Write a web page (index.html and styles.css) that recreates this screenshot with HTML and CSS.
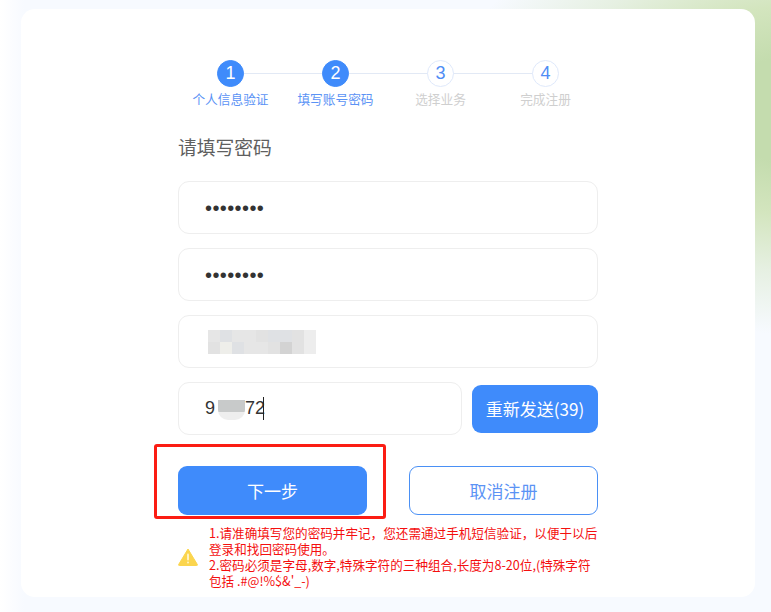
FILE: index.html
```html
<!DOCTYPE html>
<html lang="zh-CN">
<head>
<meta charset="utf-8">
<title>填写账号密码</title>
<link rel="stylesheet" href="styles.css">
</head>
<body>
<main class="card">
  <ol class="steps">
    <li class="step done"><span class="num">1</span><span class="label">个人信息验证</span></li>
    <li class="step done"><span class="num">2</span><span class="label">填写账号密码</span></li>
    <li class="step"><span class="num">3</span><span class="label">选择业务</span></li>
    <li class="step"><span class="num">4</span><span class="label">完成注册</span></li>
  </ol>
  <form class="form">
    <h1 class="title">请填写密码</h1>
    <input class="field pw" type="password" value="12345678">
    <input class="field pw" type="password" value="12345678">
    <div class="field mosaic-field">
      <div class="mosaic">
        <i class="m1"></i><i class="m2"></i><i class="m1"></i><i class="m1"></i><i class="m3"></i><i class="m2"></i><i class="m2"></i><i class="m3"></i><i class="m4"></i>
        <i class="m3"></i><i class="m5"></i><i class="m2"></i><i class="m1"></i><i class="m1"></i><i class="m3"></i><i class="m6"></i><i class="m3"></i><i class="m4"></i>
      </div>
    </div>
    <div class="code-row">
      <div class="field code"><span class="code-text">9<span class="smudge"></span>72</span><span class="caret"></span></div>
      <button type="button" class="resend">重新发送(39)</button>
    </div>
    <div class="actions">
      <div class="next-wrap">
        <button type="button" class="btn primary">下一步</button>
        <span class="highlight"></span>
      </div>
      <button type="button" class="btn outline">取消注册</button>
    </div>
    <div class="notice">
      <svg class="warn" viewBox="0 0 20 18" width="20" height="18" aria-hidden="true">
        <path d="M10 1 L19.4 16.6 Q19.6 17.5 18.7 17.5 L1.3 17.5 Q.4 17.5 .6 16.6 Z" fill="#fbd54e" stroke="#fbd54e" stroke-linejoin="round"/>
        <rect x="9" y="5.5" width="2" height="7" rx="1" fill="#fff3c4"/>
        <rect x="9" y="13.6" width="2" height="2" rx="1" fill="#fff3c4"/>
      </svg>
      <p class="notice-text">1.请准确填写您的密码并牢记，您还需通过手机短信验证，以便于以后登录和找回密码使用。<br>2.密码必须是字母,数字,特殊字符的三种组合,长度为8-20位,(特殊字符包括 .#@!%$&amp;'_-)</p>
    </div>
  </form>
</main>
</body>
</html>
```
FILE: styles.css
```css
* { box-sizing: border-box; }
html, body { height: 100%; }
body {
  margin: 0;
  padding: 9px 16px 15px 21px;
  overflow: hidden;
  font-family: "Noto Sans CJK SC", "Liberation Sans", sans-serif;
  background:
    radial-gradient(360px 225px at 810px 110px, #c4dcae 0, #c4dcae 25%, #d3e5be 47%, #e6f0e2 72%, rgba(248, 251, 255, 0) 100%),
    linear-gradient(90deg, #fff 0, #f7faff 24px);
}
.card {
  height: 588px;
  background: #fff;
  border-radius: 14px;
  padding: 51px 157px 0;
}
.steps {
  list-style: none;
  margin: 0;
  padding: 0;
  display: flex;
  width: 420px;
}
.step {
  flex: 0 0 105px;
  display: flex;
  flex-direction: column;
  align-items: center;
  position: relative;
}
.step + .step::before {
  content: "";
  position: absolute;
  top: 13px;
  right: 50%;
  width: 105px;
  height: 1px;
  background: #e2e9f5;
}
.num {
  position: relative;
  z-index: 1;
  width: 27px;
  height: 27px;
  border-radius: 50%;
  border: 1px solid #dfe9fb;
  background: #fff;
  color: #4f8df5;
  font: 18px/25px "Liberation Sans", sans-serif;
  text-align: center;
}
.done .num { background: #3f8bfb; border-color: #3f8bfb; color: #fff; }
.label {
  margin-top: 3px;
  font-size: 12.7px;
  line-height: 18px;
  color: #cfcfcf;
  white-space: nowrap;
}
.done .label { color: #5b93f5; }
.form { display: flex; flex-direction: column; }
.title {
  margin: 26px 0 21px;
  font-size: 18.8px;
  font-weight: 400;
  line-height: 26px;
  color: #5f5f5f;
}
.field {
  display: block;
  width: 420px;
  height: 53px;
  margin: 0 0 14px;
  border: 1px solid #eeeeee;
  border-radius: 11px;
  background: #fff;
  outline: none;
  padding: 0 26px;
  color: #333;
  font-size: 18px;
}
.pw {
  padding-top: 2px;
  font-family: "Liberation Sans", sans-serif;
  font-size: 20px;
  letter-spacing: .4px;
}
.mosaic-field { display: flex; align-items: center; padding-left: 29px; }
.mosaic { display: grid; grid-template-columns: repeat(9, 12px); grid-auto-rows: 12px; }
.m1 { background: #e6e6e6; }
.m2 { background: #dfe1e4; }
.m3 { background: #e2e2e2; }
.m4 { background: #ededed; }
.m5 { background: #eeeeea; }
.m6 { background: #d3d3d3; }
.code-row { display: flex; justify-content: space-between; align-items: center; }
.code {
  width: 284px;
  margin: 0;
  display: flex;
  align-items: center;
}
.code-text { font: 18px "Liberation Sans", sans-serif; color: #333; display: flex; align-items: center; }
.smudge {
  width: 27px;
  height: 20px;
  margin: 2px 0 0 3px;
  border-radius: 0 0 10px 10px;
  background: linear-gradient(#c8caca 0, #c8caca 60%, #eeeeee 62%, #eeeeee 100%);
}
.caret { width: 1px; height: 23px; margin-left: -2px; background: #222; }
.resend {
  width: 126px;
  height: 48px;
  border: 0;
  border-radius: 9px;
  background: #3f8bfb;
  color: #fff;
  font: 17px "Noto Sans CJK SC", "Liberation Sans", sans-serif;
  padding: 0;
}
.actions { display: flex; justify-content: space-between; margin-top: 31px; }
.next-wrap { position: relative; display: flex; }
.btn {
  width: 189px;
  height: 49px;
  border-radius: 9px;
  font: 17px "Noto Sans CJK SC", "Liberation Sans", sans-serif;
  padding: 0;
}
.primary { background: #3f8bfb; border: 0; color: #fff; }
.outline { background: #fff; border: 1px solid #4a90f5; color: #5b93f5; }
.highlight {
  position: absolute;
  left: -24px;
  top: -22px;
  width: 232px;
  height: 75px;
  border: 3px solid #fb1c13;
  border-radius: 3px;
}
.notice { display: flex; align-items: center; margin-top: 10px; }
.warn { flex: none; margin-right: 11px; }
.notice-text {
  margin: 0;
  width: 390px;
  font-size: 12.6px;
  line-height: 16px;
  color: #f40f0f;
  word-break: break-all;
}
```
